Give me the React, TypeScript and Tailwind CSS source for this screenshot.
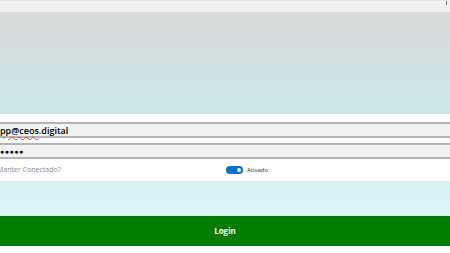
export default function App() {
  return (
    <div
      className="relative flex h-[253px] w-[450px] flex-col overflow-hidden bg-white"
      style={{ fontFamily: '"Open Sans", "Noto Sans", sans-serif' }}
    >
      {/* title strip */}
      <div className="relative h-[12px] shrink-0 border-t border-[#e6e6e6] bg-[#f2f2f2]">
        <div className="absolute right-[3px] top-0 h-[4px] w-[1px] bg-[#777]" />
      </div>

      {/* header gradient */}
      <div className="h-[102px] shrink-0 bg-gradient-to-b from-[#d9d9d9] to-[#c9e8e8]" />

      {/* form */}
      <div className="flex shrink-0 flex-col pt-[8px]">
        <div className="flex h-[16px] items-center border-y-2 border-[#b4b4b4] bg-[#f2f2f2] text-[9px] font-semibold leading-none text-black">
          <span>
            <span className="underline decoration-[#e53935] decoration-wavy decoration-1 underline-offset-2">pp@ceos</span>
            .digital
          </span>
        </div>
        <div className="mt-[5px] flex h-[16px] items-center border-y-2 border-[#b4b4b4] bg-[#f2f2f2] text-[7px] leading-none tracking-[0.5px] text-black">
          ●●●●●
        </div>
        <div className="flex h-[22px] items-center">
          <span className="ml-[-3px] w-[229px] text-[7px] text-[#8a8a8a]">Manter Conectado?</span>
          <div className="flex items-center gap-[4px]">
            <div className="flex h-[8px] w-[17px] items-center justify-end rounded-full bg-[#0a6ed1] pr-[2px]">
              <div className="h-[4px] w-[4px] rounded-full bg-white" />
            </div>
            <span className="text-[6px] text-[#333]">Ativado</span>
          </div>
        </div>
      </div>

      {/* lower band */}
      <div className="h-[35px] shrink-0 bg-gradient-to-b from-[#d4f1f3] to-[#def6f8]" />

      <button className="flex h-[30px] w-full shrink-0 items-center justify-center bg-[#007d00] text-[8px] font-bold text-white">
        Login
      </button>
      <div className="flex-1 bg-[#fbfefe]" />
    </div>
  );
}
